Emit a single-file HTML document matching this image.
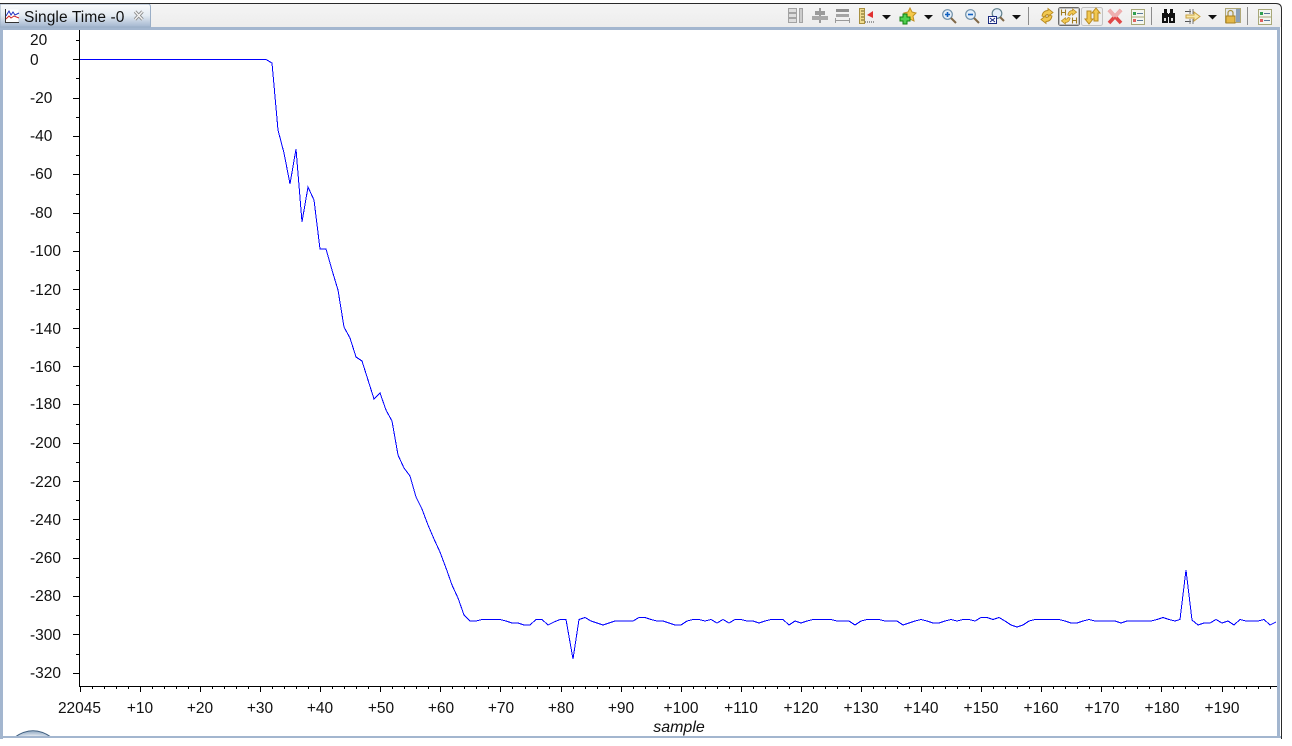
<!DOCTYPE html>
<html><head><meta charset="utf-8"><style>
html,body{margin:0;padding:0;background:#fff;width:1292px;height:746px;overflow:hidden}
svg{display:block;position:absolute;left:0;top:0}
text{font-family:"Liberation Sans",sans-serif;font-size:15.5px;fill:#111}
</style></head><body>
<svg width="1292" height="746" viewBox="0 0 1292 746" xmlns="http://www.w3.org/2000/svg">
<defs>
<linearGradient id="tab" x1="0" y1="0" x2="0" y2="1"><stop offset="0" stop-color="#fbfcfd"/><stop offset=".5" stop-color="#e4ebf2"/><stop offset="1" stop-color="#a3b6cf"/></linearGradient>
<linearGradient id="tb" x1="0" y1="0" x2="0" y2="1"><stop offset="0" stop-color="#f5f5f5"/><stop offset="1" stop-color="#ececec"/></linearGradient>
<radialGradient id="orb" cx=".5" cy="1" r=".7"><stop offset="0" stop-color="#c9503f"/><stop offset=".3" stop-color="#dfe6ee"/><stop offset="1" stop-color="#a8bbd0"/></radialGradient>
<path id="sw" d="M1 8Q2 2.500 7 2.500L7 .5L12 4.500L7 8.500L7 6.500Q4.500 6.500 3.500 9Z" fill="#f2c850" stroke="#b88a20" stroke-width=".9"/>
<g id="list"><rect x=".5" y=".5" width="13" height="15" fill="#f4f6f0" stroke="#a8a878"/><rect x="2" y="3" width="3" height="3" fill="#30a050"/><rect x="2" y="10" width="3" height="3" fill="#e06060"/><path d="M6 4.500H12M6 11.500H12" stroke="#5a7a9a"/><path d="M1 8H13" stroke="#a8a878"/></g>
</defs>

<!-- orb (behind frame) -->
<path d="M15 737Q33 724.500 51 737Z" fill="url(#orb)" stroke="#3f5f80"/>

<!-- outer frame -->
<rect x="0" y="3" width="3" height="736" fill="#a3b6cf"/>
<rect x="2" y="4" width="1279" height="24" fill="url(#tb)"/>
<rect x="0" y="27" width="1281" height="3" fill="#a3b6cf"/>
<rect x="1277" y="27" width="3" height="711" fill="#a3b6cf"/>
<rect x="1280" y="27" width="1" height="712" fill="#fff"/>
<rect x="0" y="736" width="1281" height="2" fill="#a3b6cf"/>

<!-- tab -->
<path d="M0 27V4H148Q150.500 4 150.500 7V27Z" fill="url(#tab)" stroke="#9aaec6"/>
<path d="M0 3.500H1276Q1281.500 3.500 1281.500 9V739" fill="none" stroke="#2a2a2a"/>
<g transform="translate(5,9)">
<rect x=".5" y=".5" width="13" height="13" fill="#fff"/>
<path d="M.5 0V13.500H14" fill="none" stroke="#333"/>
<path d="M1 7L4 2L6 6L8 3L10 6L14 4" fill="none" stroke="#2030c0"/>
<path d="M1 10L4 7L6 9L9 7L14 9" fill="none" stroke="#d02020"/>
</g>
<text x="24" y="22" style="font-size:15.5px;letter-spacing:.1px">Single Time -0</text>
<path d="M135 11.500L142.500 19.500M142.500 11.500L135 19.500" stroke="#8c8c8c" stroke-width="3.200"/>
<path d="M135 11.500L142.500 19.500M142.500 11.500L135 19.500" stroke="#f4f4f4" stroke-width="1.400"/>

<!-- toolbar -->
<g fill="none">
<g transform="translate(788,8)" stroke="#a3a3a3"><rect x=".5" y=".5" width="8" height="4" fill="#ddd"/><rect x=".5" y="5.500" width="8" height="4" fill="#ddd"/><rect x=".5" y="10.500" width="8" height="4" fill="#ddd"/><rect x="11.500" y=".5" width="3" height="14" fill="#ccc"/></g>
<g transform="translate(812,8)"><rect x="7" y="0" width="2" height="15" fill="#9a9a9a"/><rect x="3" y="3" width="10" height="4" fill="#9a9a9a"/><rect x="0" y="8" width="16" height="4" fill="#a8a8a8"/></g>
<g transform="translate(835,8)"><rect x="1" y="1" width="13" height="3" fill="#909090"/><rect x="1" y="6" width="13" height="3" fill="#a4a4a4"/><path d="M.5 10V15M14.500 10V15M1 12.500H14" stroke="#9a9a9a"/></g>
<g transform="translate(859,8)"><rect x=".5" y=".5" width="5" height="15" fill="#f0dc90" stroke="#a89040"/><path d="M2 3H5M2 6H5M2 9H5M2 12H5" stroke="#706020"/><path d="M8 7L14 3V10Z" fill="#e03030"/><path d="M6 14H15" stroke="#444" stroke-dasharray="1 1"/></g>
<path d="M882 15H891L886.500 19.500Z" fill="#111"/>
<g transform="translate(900,8)"><path d="M10 0L12 4L16 5L13 8L14 13L10 11L6 13L7 8L4 5L8 4Z" fill="#f4c84a" stroke="#c09020"/><path d="M3 6H7V9H10V13H7V16H3V13H0V9H3Z" fill="#50d050" stroke="#108010"/></g>
<path d="M924 15H933L928.500 19.500Z" fill="#111"/>
<g transform="translate(942,9)"><circle cx="5.500" cy="5.500" r="4.800" fill="#e4eef8" stroke="#7090a8" stroke-width="1.200"/><path d="M3 5.500H8M5.500 3V8" stroke="#1060c0" stroke-width="1.600"/><path d="M9 9L14 14" stroke="#806848" stroke-width="2"/></g>
<g transform="translate(965,9)"><circle cx="5.500" cy="5.500" r="4.800" fill="#e4eef8" stroke="#7090a8" stroke-width="1.200"/><path d="M3 5.500H8" stroke="#1060c0" stroke-width="1.600"/><path d="M9 9L14 14" stroke="#806848" stroke-width="2"/></g>
<g transform="translate(988,8)"><circle cx="9" cy="5.500" r="4.800" fill="#e4eef8" stroke="#60808c" stroke-width="1.200"/><path d="M12 9L16 13" stroke="#806848" stroke-width="2"/><rect x=".5" y="8.500" width="8" height="7" fill="#fff" stroke="#1a2a80"/><path d="M2 10L7 14M7 10L2 14" stroke="#1a2a80"/></g>
<path d="M1012 15H1021L1016.500 19.500Z" fill="#111"/>
<rect x="1028" y="7" width="1" height="18" fill="#8c8c8c"/>

<g transform="translate(1038,8)"><use href="#sw" x="3"/><use href="#sw" transform="rotate(180 7.500 8)"/></g>
<rect x="1058.500" y="7.500" width="21" height="18" rx="2" fill="#f2f2f2" stroke="#6c6c6c"/>
<rect x="1059.500" y="8.500" width="19" height="16" rx="1" fill="none" stroke="#bdbdbd"/>
<g transform="translate(1061,9)"><use href="#sw" transform="translate(6,-.5) scale(.8)"/><use href="#sw" transform="rotate(180 8 7.500) translate(6,-.5) scale(.8)"/><path d="M.5 .5V6.500M4.500 .5V6.500M.5 3.500H4.500M11.500 8.500V14.500M15.500 8.500V14.500M11.500 11.500H15.500" stroke="#a07c20" stroke-width="1.100"/></g>
<rect x="1081.500" y="7.500" width="21" height="18" rx="2" fill="#efefef" stroke="#c2c2c2"/>
<g transform="translate(1084,8)"><path d="M3 7V15H7V7H9L5 2L1 7Z" fill="#f2c850" stroke="#b88a20" transform="rotate(180 5 9)"/><path d="M10 9V1H14V9H16L12 14L8 9Z" fill="#f2c850" stroke="#b88a20" transform="rotate(180 12 7)"/></g>
<g transform="translate(1107,8)"><path d="M2 2L14 15M14 2L2 15" stroke="#e04848" stroke-width="3.600"/><path d="M2 2L8 8.500M14 2L8 8.500" stroke="#eeb0b0" stroke-width="3.600"/></g>
<use href="#list" x="1131" y="9"/>
<rect x="1151" y="7" width="1" height="18" fill="#8c8c8c"/>
<g transform="translate(1161,9)" fill="#111"><rect x="3" y="0" width="3" height="4"/><rect x="9" y="0" width="3" height="4"/><rect x="1" y="4" width="6" height="10"/><rect x="8" y="4" width="6" height="10"/><rect x="6" y="5" width="3" height="3"/><rect x="3" y="9" width="2" height="3" fill="#ddd"/><rect x="10" y="9" width="2" height="3" fill="#ddd"/></g>
<g transform="translate(1185,8)"><path d="M0 3.500H6M0 13.500H6" stroke="#555"/><path d="M5 1V6M5 11V16M8 1V6M8 11V16" stroke="#777"/><path d="M1 7H9V4L15 8.500L9 13V10H1Z" fill="#f8e8a8" stroke="#c8a040"/></g>
<path d="M1208 15H1217L1212.500 19.500Z" fill="#111"/>
<g transform="translate(1225,8)"><rect x=".5" y=".5" width="15" height="14" fill="#e4e8ee" stroke="#b0a878"/><rect x="11" y="1" width="4" height="13" fill="#8ca0b8"/><path d="M3 8V5A2.500 2.500 0 0 1 8 5V8" stroke="#a89040" stroke-width="1.200"/><rect x="1" y="8" width="9" height="7" fill="#e4b848" stroke="#a88020"/></g>
<rect x="1247" y="7" width="1" height="18" fill="#8c8c8c"/>
<use href="#list" x="1258" y="9"/>
</g>

<!-- axes -->
<g shape-rendering="crispEdges" stroke="#000" fill="none">
<path d="M79.500 30V687"/>
<path d="M79 686.500H1277"/>
<path d="M73 59.500H79M73 98.500H79M73 136.500H79M73 174.500H79M73 213.500H79M73 251.500H79M73 289.500H79M73 328.500H79M73 366.500H79M73 404.500H79M73 443.500H79M73 481.500H79M73 519.500H79M73 558.500H79M73 596.500H79M73 634.500H79M73 673.500H79"/>
<path d="M76 40.500H79M76 78.500H79M76 117.500H79M76 155.500H79M76 194.500H79M76 232.500H79M76 270.500H79M76 309.500H79M76 347.500H79M76 385.500H79M76 424.500H79M76 462.500H79M76 500.500H79M76 539.500H79M76 577.500H79M76 615.500H79M76 654.500H79"/>
<path d="M80.500 687V692M140.500 687V692M200.500 687V692M260.500 687V692M320.500 687V692M380.500 687V692M440.500 687V692M500.500 687V692M561.500 687V692M621.500 687V692M681.500 687V692M741.500 687V692M801.500 687V692M861.500 687V692M921.500 687V692M981.500 687V692M1041.500 687V692M1101.500 687V692M1161.500 687V692M1222.500 687V692"/>
<path d="M92.500 687V689M104.500 687V689M116.500 687V689M128.500 687V689M152.500 687V689M164.500 687V689M176.500 687V689M188.500 687V689M212.500 687V689M224.500 687V689M236.500 687V689M248.500 687V689M272.500 687V689M284.500 687V689M296.500 687V689M308.500 687V689M332.500 687V689M344.500 687V689M356.500 687V689M368.500 687V689M392.500 687V689M404.500 687V689M416.500 687V689M428.500 687V689M452.500 687V689M464.500 687V689M476.500 687V689M488.500 687V689M512.500 687V689M525.500 687V689M537.500 687V689M549.500 687V689M573.500 687V689M585.500 687V689M597.500 687V689M609.500 687V689M633.500 687V689M645.500 687V689M657.500 687V689M669.500 687V689M693.500 687V689M705.500 687V689M717.500 687V689M729.500 687V689M753.500 687V689M765.500 687V689M777.500 687V689M789.500 687V689M813.500 687V689M825.500 687V689M837.500 687V689M849.500 687V689M873.500 687V689M885.500 687V689M897.500 687V689M909.500 687V689M933.500 687V689M945.500 687V689M957.500 687V689M969.500 687V689M993.500 687V689M1005.500 687V689M1017.500 687V689M1029.500 687V689M1053.500 687V689M1065.500 687V689M1077.500 687V689M1089.500 687V689M1113.500 687V689M1125.500 687V689M1137.500 687V689M1149.500 687V689M1173.500 687V689M1185.500 687V689M1198.500 687V689M1210.500 687V689M1234.500 687V689M1246.500 687V689M1258.500 687V689M1270.500 687V689"/>
</g>

<!-- data -->
<polyline fill="none" stroke="#0000ff" stroke-width="1" shape-rendering="crispEdges" points="80,59.500 266,59.500 272,63 278,130 284,153 290,184 296,149 302,222 308,187 314,200 320,249 326,249 332,270 338,290 344,327 350,338 356,357 362,361 368,380 374,399 380,393 386,410 392,421 398,455 404,468 410,476 416,497 422,509 428,525 434,539 440,552 446,568 452,585 458,598 464,615 470,621 476,621 482,619.500 488,619.500 494,619.500 500,619.500 506,621 512,623 518,623 524,625 530,625 536,619.500 542,619.500 548,625 554,622 560,619.500 566,619.500 573,659 579,619.500 585,617.500 591,621 597,623 603,625 609,623 615,621 621,621 627,621 633,621 639,617.500 645,617.500 651,619.500 657,621 663,621 669,623 675,625 681,625 687,621 693,619.500 699,619.500 705,621 711,619.500 717,623 723,619.500 729,623 735,619.500 741,619.500 747,621 753,621 759,623 765,621 771,619.500 777,619.500 783,619.500 789,625 795,621 801,623 807,621 813,619.500 819,619.500 825,619.500 831,619.500 837,621 843,621 849,621 855,625 861,621 867,619.500 873,619.500 879,619.500 885,621 891,621 897,621 903,625 909,623 915,621 921,619.500 927,621 933,623 939,623 945,621 951,619.500 957,621 963,619.500 969,619.500 975,621 981,617.500 987,617.500 993,619.500 999,617.500 1005,621 1011,625 1017,627 1023,625 1029,621 1035,619.500 1041,619.500 1047,619.500 1053,619.500 1059,619.500 1065,621 1071,623 1077,623 1083,621 1089,619.500 1095,621 1101,621 1107,621 1115,621 1121,623 1127,621 1133,621 1139,621 1145,621 1151,621 1157,619.500 1163,617.500 1169,619.500 1175,621 1180,619.500 1186,570 1192,620 1198,625 1204,623 1210,623 1216,619.500 1222,623 1228,621 1234,625 1240,619.500 1246,621 1252,621 1258,621 1264,619.500 1270,625 1276,622"/>

<!-- y labels -->
<g>
<text x="30" y="45">20</text><text x="30" y="65">0</text><text x="30" y="103">-20</text><text x="30" y="141">-40</text><text x="30" y="179">-60</text><text x="30" y="218">-80</text><text x="30" y="256">-100</text><text x="30" y="295">-120</text><text x="30" y="334">-140</text><text x="30" y="372">-160</text><text x="30" y="409">-180</text><text x="30" y="448">-200</text><text x="30" y="487">-220</text><text x="30" y="525">-240</text><text x="30" y="563">-260</text><text x="30" y="601">-280</text><text x="30" y="640">-300</text><text x="30" y="678">-320</text>
</g>
<!-- x labels -->
<g text-anchor="middle">
<text x="79.500" y="713">22045</text><text x="140" y="713">+10</text><text x="200" y="713">+20</text><text x="260" y="713">+30</text><text x="320" y="713">+40</text><text x="381" y="713">+50</text><text x="441" y="713">+60</text><text x="501" y="713">+70</text><text x="561" y="713">+80</text><text x="621" y="713">+90</text><text x="681" y="713">+100</text><text x="741" y="713">+110</text><text x="801" y="713">+120</text><text x="861" y="713">+130</text><text x="921" y="713">+140</text><text x="981" y="713">+150</text><text x="1041" y="713">+160</text><text x="1102" y="713">+170</text><text x="1162" y="713">+180</text><text x="1222" y="713">+190</text>
<text x="679" y="732" style="font-style:italic;font-size:16px">sample</text>
</g>
</svg>
</body></html>
